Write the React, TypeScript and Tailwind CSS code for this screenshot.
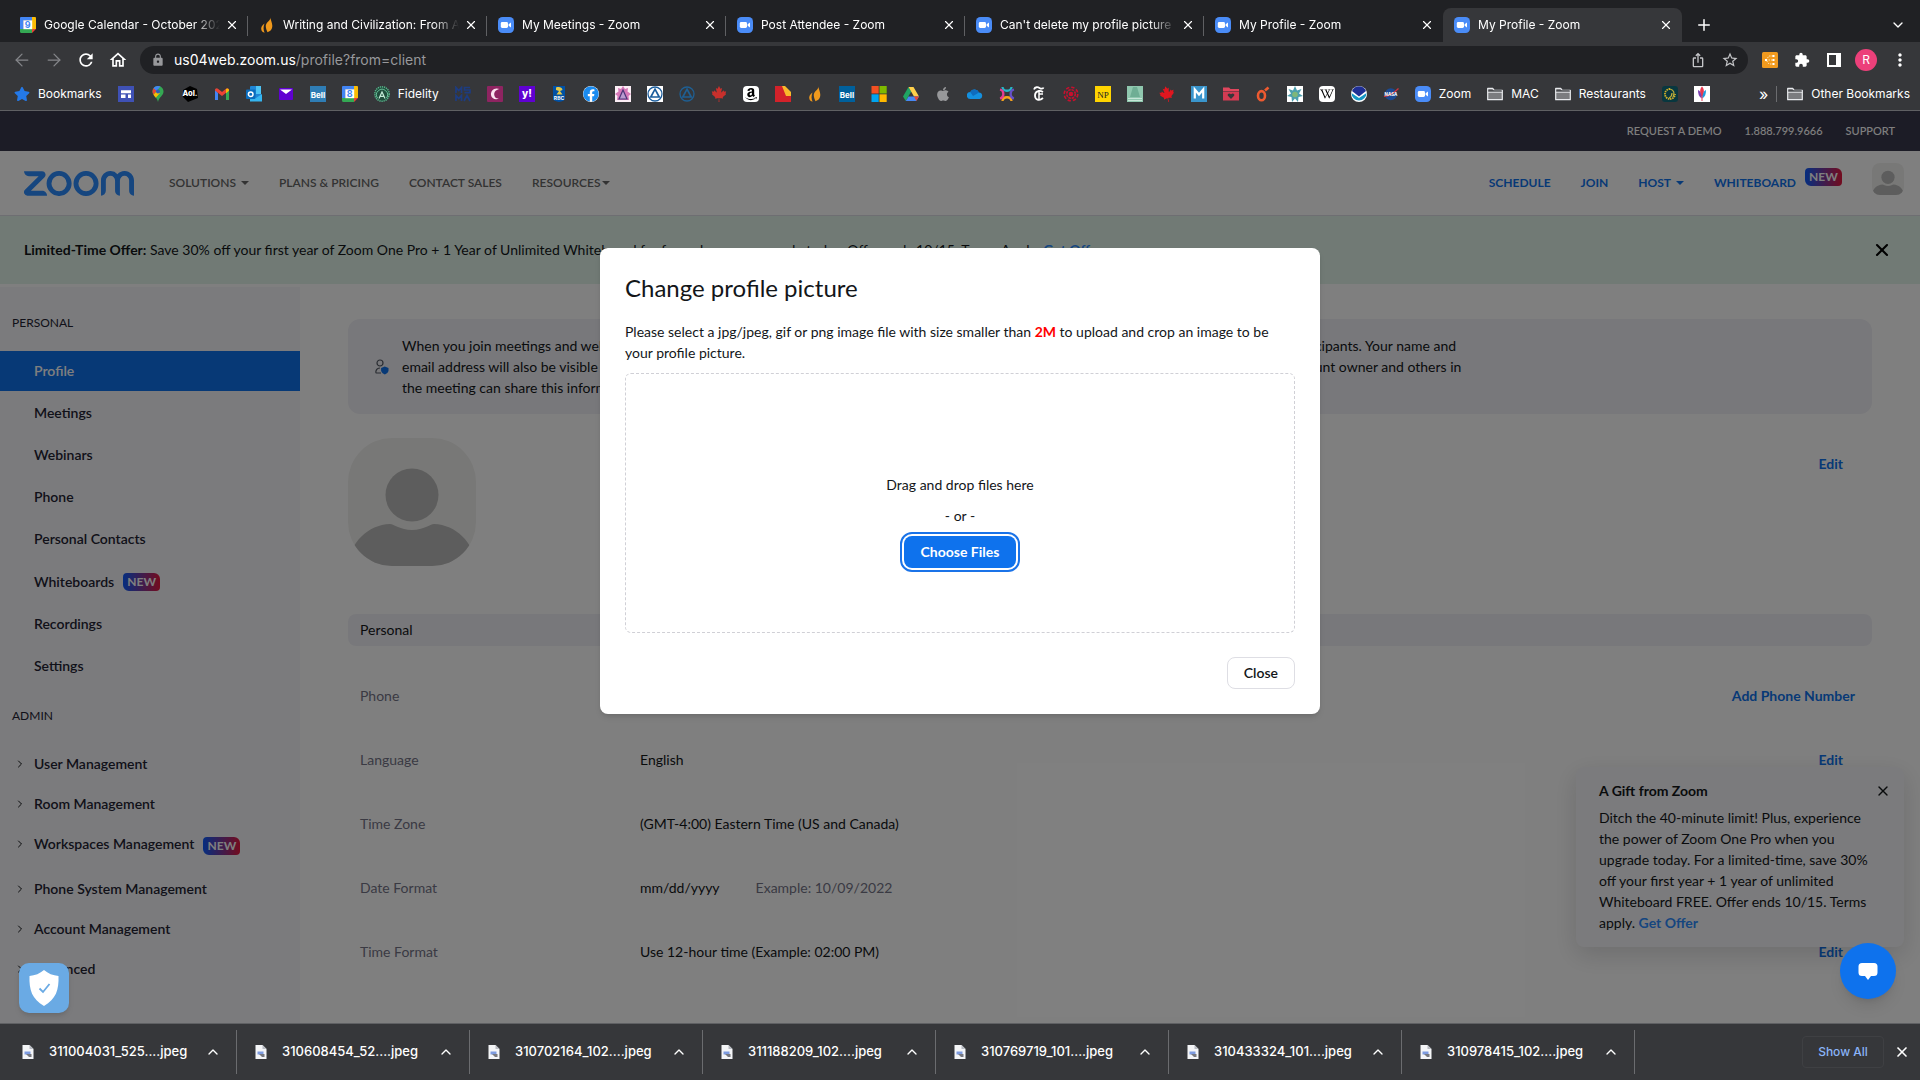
import type { ReactNode } from "react";
import {
  ArrowLeft,
  ArrowRight,
  ChevronDown,
  ChevronRight,
  ChevronUp,
  Plus,
  X,
} from "lucide-react";
import {
  FaAmazon,
  FaApple,
  FaCanadianMapleLeaf,
  FaFacebook,
  FaStar,
  FaWikipediaW,
} from "react-icons/fa";
import {
  MdExtension,
  MdLock,
  MdMoreVert,
  MdOutlineHome,
  MdOutlineIosShare,
  MdRefresh,
  MdStarBorder,
} from "react-icons/md";
import { SiZoom } from "react-icons/si";

function Glyph({ children }: { children: ReactNode }) {
  return (
    <svg viewBox="0 0 16 16" className="h-4 w-4 shrink-0" aria-hidden="true">
      {children}
    </svg>
  );
}

function ZoomIcon() {
  return (
    <Glyph>
      <rect width="16" height="16" rx="4.5" fill="#4a8cf7" />
      <rect x="2.8" y="5" width="7.2" height="6" rx="1.4" fill="#fff" />
      <path d="M10.6 7.2 13 5.4v5.2l-2.4-1.8z" fill="#fff" />
    </Glyph>
  );
}

function CalendarIcon({ day }: { day: string }) {
  return (
    <Glyph>
      <path d="M0 1.2C0 .5.5 0 1.2 0H12v3.5H3.5V12H0z" fill="#4285f4" />
      <path d="M12 0h2.8c.7 0 1.2.5 1.2 1.2V12h-4z" fill="#fbbc04" />
      <path d="M0 12h12v4H1.2C.5 16 0 15.5 0 14.8z" fill="#34a853" />
      <path d="M12 12h4l-4 4z" fill="#ea4335" />
      <rect x="3.3" y="3.3" width="8.9" height="8.9" fill="#fff" />
      <text x="7.8" y="11" fontSize="9" fontWeight="700" textAnchor="middle" fill="#4285f4">
        {day}
      </text>
    </Glyph>
  );
}

function FlameIcon() {
  return (
    <Glyph>
      <path d="M11.5.3c.8 3-5.2 5-4.7 9.5.2 2.200 1 4 1.700 5.400 2.800-.8 5-3 4.800-6.700-.2-3.400-1.700-5-1.800-8.200z" fill="#f0991c" />
      <path d="M5.5 6.500C3 8.200 1.600 10.500 2.400 13c.4 1.300 1.500 2.300 3.200 2.700-1.400-3-1.300-6-.1-9.200z" fill="#f0991c" />
    </Glyph>
  );
}

function FolderIcon() {
  return (
    <Glyph>
      <path d="M.7 13.7V2.300h5l1.500 2h8.100v9.400z" fill="#7b7c7f" stroke="#e8eaed" strokeWidth="1.2" strokeLinejoin="round" />
      <path d="M1.300 4.300h13.400v1.500H1.300z" fill="#36373a" />
      <path d="M.7 6.200h14.600" stroke="#e8eaed" strokeWidth="1" />
    </Glyph>
  );
}

function BellIcon({ fill }: { fill: string }) {
  return (
    <Glyph>
      <rect width="16" height="16" fill={fill} />
      <text x="8" y="11.5" fontSize="8" fontWeight="700" textAnchor="middle" fill="#fff">
        Bell
      </text>
    </Glyph>
  );
}

function TriangleBadge({ ring, bg }: { ring: string; bg: string }) {
  return (
    <Glyph>
      <rect width="16" height="16" fill={bg} />
      <circle cx="8" cy="8" r="7" fill="none" stroke={ring} strokeWidth="1.3" />
      <path d="M8 3.2 12.2 11H3.8z" fill="none" stroke={ring} strokeWidth="1.7" />
    </Glyph>
  );
}

interface Bookmark {
  name: string;
  label?: string;
  icon: ReactNode;
}

const bookmarks: Bookmark[] = [
  { name: "Bookmarks", label: "Bookmarks", icon: <FaStar className="h-4 w-4 shrink-0 text-[#2479e8]" /> },
  {
    name: "Sites",
    icon: (
      <Glyph>
        <rect width="16" height="16" fill="#3f51b5" />
        <path d="M3 4.3h10v2.900H3zM3 8.600h4.500v3.400H3zM10 8.600h3v3.400h-3z" fill="#fff" />
      </Glyph>
    ),
  },
  {
    name: "Maps",
    icon: (
      <Glyph>
        <path d="M8 0C4.700 0 2.500 2.500 2.500 5.500c0 4 4.500 5.500 5.500 10.500 1-5 5.500-6.500 5.500-10.500C13.500 2.500 11.300 0 8 0z" fill="#34a853" />
        <path d="M8 0C6 0 4.500.9 3.500 2.300L6 5.500 10.500.6C9.700.2 8.900 0 8 0z" fill="#4285f4" />
        <path d="M3.500 2.300C2 4.500 2.400 7 3.500 8.700L6.500 5z" fill="#ea4335" />
        <path d="M3.500 8.700c.6 1 1.500 2 2.300 3L10 7 6 6z" fill="#fbbc04" />
        <circle cx="8" cy="5.5" r="2" fill="#2b5fb8" />
      </Glyph>
    ),
  },
  {
    name: "Aol",
    icon: (
      <Glyph>
        <path d="M1 4 8 0l7 3 1 9-10 4-5-5z" fill="#000" />
        <text x="8" y="9.500" fontSize="7.500" fontWeight="800" textAnchor="middle" fill="#fff">
          Aol.
        </text>
      </Glyph>
    ),
  },
  {
    name: "Gmail",
    icon: (
      <Glyph>
        <path d="M1 3v11h3V7z" fill="#4285f4" />
        <path d="M15 3v11h-3V7z" fill="#34a853" />
        <path d="M1 4.500C1 2 3 1.800 4.300 3L8 6l3.700-3C13 1.800 15 2 15 4.500L8 10z" fill="#ea4335" />
        <path d="M12 3v4.200l3-2.500C15 2.400 13.200 2 12 3z" fill="#fbbc04" />
      </Glyph>
    ),
  },
  {
    name: "Outlook",
    icon: (
      <Glyph>
        <rect x="4" y="0" width="11" height="14" rx="1" fill="#1f86d6" />
        <path d="M10 0h5v8h-5z" fill="#4dc4f5" />
        <path d="M4 8l6 4 6-4v7.500H4z" fill="#35b5f0" />
        <rect x="0" y="3.500" width="9.500" height="9.500" rx="1" fill="#0a6cbd" />
        <circle cx="4.700" cy="8.200" r="2.300" fill="none" stroke="#fff" strokeWidth="1.500" />
      </Glyph>
    ),
  },
  {
    name: "Mail",
    icon: (
      <Glyph>
        <rect x="1" y="2" width="14" height="12" rx="1" fill="#6001d2" />
        <path d="M2 3.500h12L8 8z" fill="#fff" />
      </Glyph>
    ),
  },
  { name: "Bell", icon: <BellIcon fill="#2f7db5" /> },
  { name: "Calendar", icon: <CalendarIcon day="8" /> },
  {
    name: "Fidelity",
    label: "Fidelity",
    icon: (
      <Glyph>
        <circle cx="8" cy="8" r="7.200" fill="#1f4d3c" stroke="#56b389" strokeWidth="1.500" strokeDasharray="1.300 .8" />
        <path d="M3.500 12a5.500 5.500 0 1 1 9 0" fill="none" stroke="#6cc39c" strokeWidth="1" />
        <path d="M5 12.500 8 6l3 6.500M6.500 10.300h3" fill="none" stroke="#c3ead7" strokeWidth="1.200" />
      </Glyph>
    ),
  },
  {
    name: "MSMA",
    icon: (
      <Glyph>
        <path d="M1 7V1.500l2.700 3 2.800-3V7M15 1.500H9.500v2.500H15v2.700H9.500M1 15V9.500l2.700 3 2.800-3V15M9 15l3-5.500 3 5.500" fill="none" stroke="#1d3c80" strokeWidth="1.700" />
      </Glyph>
    ),
  },
  {
    name: "Crescent",
    icon: (
      <Glyph>
        <rect width="16" height="16" rx="1" fill="#8e2461" />
        <path d="M12.500 3C7 1 3.500 5 4 9c.4 3.500 4.500 5.500 8 3.500-3 .3-4.700-1.500-4.800-4C7.100 5.500 9.500 3.500 12.500 3z" fill="#fbe3f0" />
      </Glyph>
    ),
  },
  {
    name: "Yahoo",
    icon: (
      <Glyph>
        <rect width="16" height="16" fill="#6001d2" />
        <text x="8" y="11" fontSize="10" fontWeight="800" textAnchor="middle" fill="#fff">
          y!
        </text>
      </Glyph>
    ),
  },
  {
    name: "RBC",
    icon: (
      <Glyph>
        <path d="M2 0h12v13c-1 2-3 2.500-6 3-3-.5-5-1-6-3z" fill="#0051a5" />
        <path d="M5 1.500c3-1 6-.5 6.500 2.500l-2.500 1 2.500 3.500H5.500L8 5 5 4z" fill="#e3c84a" />
        <text x="8" y="13.800" fontSize="5" fontWeight="700" textAnchor="middle" fill="#fff">
          RBC
        </text>
      </Glyph>
    ),
  },
  { name: "Facebook", icon: <FaFacebook className="h-4 w-4 shrink-0 rounded-full bg-white text-[#1a8bf0]" /> },
  {
    name: "Lotus",
    icon: (
      <Glyph>
        <rect width="16" height="16" fill="#fbeef5" />
        <path d="M8 0l2 3 3-1-.5 3.500L16 8l-2.500 2 .5 4H2l.5-4L0 8l3.500-2.500L3 2l3 1z" fill="#d678b8" />
        <path d="M8 4l4 9H4z" fill="#b99bd0" stroke="#4b3478" strokeWidth="1.200" />
      </Glyph>
    ),
  },
  { name: "Alcoholics Anonymous", icon: <TriangleBadge ring="#1b5d9c" bg="#fff" /> },
  { name: "Area meetings", icon: <TriangleBadge ring="#1f5f92" bg="#36373a" /> },
  { name: "Canada", icon: <FaCanadianMapleLeaf className="h-4 w-4 shrink-0 text-[#c9302c]" /> },
  {
    name: "Amazon",
    icon: (
      <span className="flex h-4 w-4 shrink-0 items-center justify-center rounded-sm bg-white">
        <FaAmazon className="h-[14px] w-[14px] text-black" />
      </span>
    ),
  },
  {
    name: "Flag",
    icon: (
      <Glyph>
        <path d="M0 0h7l9 10v6H0z" fill="#d3222a" />
        <path d="M7 0h3l6 6v4H11z" fill="#f9b92b" />
      </Glyph>
    ),
  },
  { name: "Wondrium", icon: <FlameIcon /> },
  { name: "Bell MTS", icon: <BellIcon fill="#00609c" /> },
  {
    name: "Microsoft",
    icon: (
      <Glyph>
        <path d="M.5 0h7.200v7.500H.5z" fill="#f25022" />
        <path d="M8.500 0h7.200v7.500H8.500z" fill="#7fba00" />
        <path d="M.5 8.300h7.200V16H.5z" fill="#00a4ef" />
        <path d="M8.500 8.300h7.200V16H8.500z" fill="#ffb900" />
      </Glyph>
    ),
  },
  {
    name: "Drive",
    icon: (
      <Glyph>
        <path d="M5.500 1 0 10.500 2.800 15l5.400-9.400z" fill="#1fa463" />
        <path d="M5.500 1h5L16 10.500h-5z" fill="#ffd04b" />
        <path d="M5.500 10.500H16L13.200 15H2.800z" fill="#4688f4" />
        <path d="M11 10.500h5L13.300 15z" fill="#ea4335" />
      </Glyph>
    ),
  },
  { name: "Apple", icon: <FaApple className="h-4 w-4 shrink-0 text-[#97989a]" /> },
  {
    name: "OneDrive",
    icon: (
      <Glyph>
        <path d="M3.500 13a3.500 3.500 0 0 1-.3-7A5 5 0 0 1 12 6.500 3.300 3.300 0 0 1 12.700 13z" fill="#1490df" />
        <path d="M3.200 6A5 5 0 0 1 12 6.500L6 10z" fill="#0f6cbd" />
      </Glyph>
    ),
  },
  {
    name: "Xfinity",
    icon: (
      <Glyph>
        <path d="M3.500 1C4 6 12 6 12.500 1" fill="none" stroke="#27b5c7" strokeWidth="2.300" />
        <path d="M3.500 15C4 10 12 10 12.500 15" fill="none" stroke="#f6a21e" strokeWidth="2.300" />
        <path d="M1 3.500C5.500 4.500 5.500 11.500 1 12.500" fill="none" stroke="#e53c91" strokeWidth="2.300" />
        <path d="M15 3.500C10.500 4.500 10.500 11.500 15 12.500" fill="none" stroke="#6550c8" strokeWidth="2.300" />
      </Glyph>
    ),
  },
  {
    name: "New York Times",
    icon: (
      <Glyph>
        <path d="M3 3.500C4 .5 7 1 8.500 2s3.500 1 4-.5" fill="none" stroke="#fff" strokeWidth="1.800" />
        <path d="M12 6C8 3.500 4 5.500 4 9.500s4 6 8 2.500" fill="none" stroke="#fff" strokeWidth="1.800" />
        <path d="M8 4v9.500M8 8h4" stroke="#fff" strokeWidth="1.500" />
      </Glyph>
    ),
  },
  {
    name: "CBC",
    icon: (
      <Glyph>
        <circle cx="8" cy="8" r="2.300" fill="#c8102e" />
        <circle cx="8" cy="8" r="4.300" fill="none" stroke="#c8102e" strokeWidth="1.600" strokeDasharray="2.500 .88" />
        <circle cx="8" cy="8" r="6.800" fill="none" stroke="#c8102e" strokeWidth="1.600" strokeDasharray="3.400 1.940" />
      </Glyph>
    ),
  },
  {
    name: "National Post",
    icon: (
      <Glyph>
        <rect width="16" height="16" fill="#ffd400" />
        <text x="8" y="11.500" fontSize="9" fontFamily="Liberation Serif, serif" textAnchor="middle" fill="#222">
          NP
        </text>
      </Glyph>
    ),
  },
  {
    name: "Tower",
    icon: (
      <Glyph>
        <rect width="16" height="16" fill="#8fc7ae" />
        <path d="M6 1h4l3 10H3z" fill="#6fae94" />
        <path d="M1 12.500h14M1 14.500h14" stroke="#d4ece1" strokeWidth=".8" />
      </Glyph>
    ),
  },
  { name: "Maple leaf", icon: <FaCanadianMapleLeaf className="h-4 w-4 shrink-0 -rotate-12 text-[#e0161f]" /> },
  {
    name: "Medium",
    icon: (
      <Glyph>
        <rect width="16" height="16" fill="#3a95cc" />
        <path d="M3.800 12.500v-9L8 8.500l4.200-5v9" fill="none" stroke="#fff" strokeWidth="2.200" />
      </Glyph>
    ),
  },
  {
    name: "Favourites folder",
    icon: (
      <Glyph>
        <path d="M0 1.500h6l1.500 1.500H16v2H0z" fill="#e0465d" />
        <rect y="5.500" width="16" height="9" fill="#d43b53" />
        <path d="M8 13 4.900 9.800c-1-1.600 1.300-3.300 3.100-1.500 1.800-1.800 4.100-.1 3.100 1.500z" fill="#36373a" />
      </Glyph>
    ),
  },
  {
    name: "Orange",
    icon: (
      <Glyph>
        <ellipse cx="6.500" cy="9.700" rx="3.500" ry="4.600" fill="none" stroke="#ee5a30" strokeWidth="2.600" />
        <path d="M10 4.500 13.500 1.500" stroke="#ee5a30" strokeWidth="2.600" />
      </Glyph>
    ),
  },
  {
    name: "Petals",
    icon: (
      <Glyph>
        <rect width="16" height="16" fill="#fff" />
        <path d="M8 0l2 4.500L14.500 3 12 7.500l4 2.500-4.500 1L11 16l-3-3.500L5 16l-.5-5L0 10l4-2.500L1.500 3 6 4.500z" fill="#4c9fae" />
        <circle cx="8" cy="8.500" r="2.800" fill="#7fb77a" />
      </Glyph>
    ),
  },
  {
    name: "Wikipedia",
    icon: (
      <span className="flex h-4 w-4 shrink-0 items-center justify-center rounded-sm bg-white">
        <FaWikipediaW className="h-[14px] w-[14px] text-black" />
      </span>
    ),
  },
  {
    name: "NOAA",
    icon: (
      <Glyph>
        <circle cx="8" cy="8" r="8" fill="#fff" />
        <path d="M1 5a7.500 7.500 0 0 1 14 0L8 10.500z" fill="#1f2f94" />
        <path d="M.5 7 8 12l7.500-5a7.500 7.500 0 0 1-15 0z" fill="#1597c6" />
      </Glyph>
    ),
  },
  {
    name: "NASA",
    icon: (
      <Glyph>
        <circle cx="7.800" cy="8.300" r="6" fill="#1a4a94" />
        <path d="M1 10.500C6 10 12 6 15.500 2.500" fill="none" stroke="#d5323e" strokeWidth="1.200" />
        <text x="8" y="10" fontSize="4.500" fontWeight="700" textAnchor="middle" fill="#fff">
          NASA
        </text>
      </Glyph>
    ),
  },
  { name: "Zoom", label: "Zoom", icon: <ZoomIcon /> },
  { name: "MAC", label: "MAC", icon: <FolderIcon /> },
  { name: "Restaurants", label: "Restaurants", icon: <FolderIcon /> },
  {
    name: "Circle",
    icon: (
      <Glyph>
        <rect width="16" height="16" rx="3" fill="#08373f" />
        <path d="M8 3a5 5 0 1 0 5 5" fill="none" stroke="#d6b32b" strokeWidth="1.800" strokeDasharray="1.500 .7" />
        <path d="M8 3c4 1 5 4 3 8M7 12c2-1 3-3 3-5" fill="none" stroke="#c2b03a" strokeWidth="1.200" />
      </Glyph>
    ),
  },
  {
    name: "Feather",
    icon: (
      <Glyph>
        <rect width="16" height="16" fill="#fff" />
        <path d="M8 .5c2.500 2 2.500 8 0 11.500-2.500-3.500-2.500-9.500 0-11.500z" fill="#e8384f" />
        <path d="M4 4c2.500 1 3.500 4 3.700 8.500C5 11 4 8 4 4z" fill="#7b3fb0" />
        <path d="M12 4c-2.500 1-3.500 4-3.700 8.500C11 11 12 8 12 4z" fill="#1f9be0" />
        <path d="M8 11v4" stroke="#e8384f" strokeWidth="1" />
      </Glyph>
    ),
  },
];

const tabs = [
  { title: "Google Calendar - October 2022", icon: <CalendarIcon day="9" /> },
  { title: "Writing and Civilization: From Ancient", icon: <FlameIcon /> },
  { title: "My Meetings - Zoom", icon: <ZoomIcon /> },
  { title: "Post Attendee - Zoom", icon: <ZoomIcon /> },
  { title: "Can't delete my profile picture", icon: <ZoomIcon /> },
  { title: "My Profile - Zoom", icon: <ZoomIcon /> },
  { title: "My Profile - Zoom", icon: <ZoomIcon />, active: true },
];

const downloads = [
  "311004031_525....jpeg",
  "310608454_52....jpeg",
  "310702164_102....jpeg",
  "311188209_102....jpeg",
  "310769719_101....jpeg",
  "310433324_101....jpeg",
  "310978415_102....jpeg",
];

const personalItems = ["Profile", "Meetings", "Webinars", "Phone", "Personal Contacts", "Whiteboards", "Recordings", "Settings"];

const adminItems = [
  "User Management",
  "Room Management",
  "Workspaces Management",
  "Phone System Management",
  "Account Management",
  "Advanced",
];

const profileRows = [
  { label: "Phone", value: "", action: "Add Phone Number" },
  { label: "Language", value: "English", action: "Edit" },
  { label: "Time Zone", value: "(GMT-4:00) Eastern Time (US and Canada)", action: "Edit" },
  { label: "Date Format", value: "mm/dd/yyyy", example: "Example: 10/09/2022", action: "Edit" },
  { label: "Time Format", value: "Use 12-hour time (Example: 02:00 PM)", action: "Edit" },
];

function NewBadge() {
  return (
    <span className="inline-flex h-[18px] w-[37px] items-center justify-center rounded-sm rounded-tr-md rounded-bl-md bg-linear-to-r/srgb from-[#0b5cff] to-[#e8173d] text-xs font-bold text-white">
      NEW
    </span>
  );
}

function Caret() {
  return (
    <svg viewBox="0 0 8 4" className="h-1 w-2" aria-hidden="true">
      <path d="M0 0h8L4 4z" fill="currentColor" />
    </svg>
  );
}

function Avatar({ className }: { className: string }) {
  return (
    <svg viewBox="0 0 128 128" className={className} role="img" aria-label="Profile picture">
      <rect width="128" height="128" fill="#f1f1ee" />
      <circle cx="64" cy="57" r="26.500" fill="#bababa" />
      <path d="M0 128c2-24 20-41 42-42 4 0 10 6 22 6s18-6 22-6c22 1 40 18 42 42z" fill="#bababa" />
    </svg>
  );
}

function TabStrip() {
  return (
    <div className="flex h-[42px] items-end bg-[#202124] pl-[9px] text-white">
      {tabs.map((tab, i) => (
        <div
          key={i}
          className={`relative flex h-[34px] w-[239px] items-center rounded-t-lg pr-2 pl-[11px] ${tab.active ? "bg-[#36373a]" : ""}`}
        >
          {tab.icon}
          <span className="ml-2 h-5 flex-1 overflow-hidden mask-r-from-85% text-xs leading-5 whitespace-nowrap">{tab.title}</span>
          <button aria-label="Close tab" className="ml-1 flex h-4 w-4 items-center justify-center">
            <X className="h-3.5 w-3.5" />
          </button>
          {i < 5 && <span className="absolute top-2 right-0 h-5 w-px bg-[#5f6063]" />}
        </div>
      ))}
      <button aria-label="New tab" className="ml-[13px] flex h-[34px] items-center">
        <Plus className="h-[18px] w-[18px]" />
      </button>
      <button aria-label="Search tabs" className="mr-[14px] ml-auto flex h-[34px] items-center">
        <ChevronDown className="h-4 w-4" />
      </button>
    </div>
  );
}

function Toolbar() {
  return (
    <div className="flex h-9 items-center pt-1 pr-[10px] pb-1 pl-3 text-white">
      <div className="flex w-32 gap-3">
        <button aria-label="Back" className="text-[#85868a]">
          <ArrowLeft className="h-5 w-5" strokeWidth={1.5} />
        </button>
        <button aria-label="Forward" className="text-[#85868a]">
          <ArrowRight className="h-5 w-5" strokeWidth={1.5} />
        </button>
        <button aria-label="Reload">
          <MdRefresh className="h-5 w-5" />
        </button>
        <button aria-label="Home">
          <MdOutlineHome className="h-5 w-5" />
        </button>
      </div>
      <div className="flex h-7 flex-1 items-center rounded-full bg-[#202124] pr-[9px] pl-[11px] text-sm">
        <MdLock className="mr-[9px] h-[14px] w-[14px] text-[#97989b]" />
        <span>us04web.zoom.us</span>
        <input
          aria-label="Address"
          defaultValue="/profile?from=client"
          className="min-w-0 flex-1 bg-transparent text-[#97989b] outline-none"
        />
        <button aria-label="Share" className="mr-[15px] text-[#c4c5c8]">
          <MdOutlineIosShare className="h-4 w-4" />
        </button>
        <button aria-label="Bookmark this page" className="text-[#c4c5c8]">
          <MdStarBorder className="h-[18px] w-[18px]" />
        </button>
      </div>
      <div className="ml-[14px] flex items-center gap-4">
        <button aria-label="Extension">
          <Glyph>
            <rect width="16" height="16" rx="1.500" fill="#f19a1f" />
            <path d="M11 4H7L4 8l3 4h4M4 8h7" fill="none" stroke="#ffe3b5" strokeWidth="1" strokeDasharray="1.500 1" />
            <path d="M10.500 4h2M10.500 12h2M10.500 8h2M3 8h2" stroke="#fff" strokeWidth="1.800" />
          </Glyph>
        </button>
        <button aria-label="Extensions">
          <MdExtension className="h-4 w-4" />
        </button>
        <button aria-label="Side panel">
          <Glyph>
            <rect x="2" y="2" width="12" height="12" fill="none" stroke="#fff" strokeWidth="2" />
            <path d="M10 2h4v12h-4z" fill="#fff" />
          </Glyph>
        </button>
        <button aria-label="Account" className="-mx-[3px] flex h-[22px] w-[22px] items-center justify-center rounded-full bg-[#ec407a] text-xs">
          R
        </button>
        <button aria-label="Menu">
          <MdMoreVert className="h-5 w-5" />
        </button>
      </div>
    </div>
  );
}

function BookmarksBar() {
  return (
    <div className="flex h-[33px] items-center gap-4 border-b border-[#5f6063] pr-[10px] pl-[14px] text-xs text-white">
      {bookmarks.map((b) => (
        <a key={b.name} href="#" aria-label={b.name} className="flex shrink-0 items-center gap-2">
          {b.icon}
          {b.label}
        </a>
      ))}
      <div className="ml-auto flex items-center">
        <button aria-label="More bookmarks" className="mr-2 text-base leading-4">
          »
        </button>
        <span className="mr-[10px] h-4 w-px bg-[#6b6c6f]" />
        <a href="#" className="flex items-center gap-2">
          <FolderIcon />
          Other Bookmarks
        </a>
      </div>
    </div>
  );
}

function SiteHeader() {
  return (
    <header>
      <div className="flex h-10 items-center justify-end gap-[23px] bg-[#39394d] pr-[25px] text-[11px] font-medium text-white">
        <a href="#">REQUEST A DEMO</a>
        <a href="#">1.888.799.9666</a>
        <a href="#">SUPPORT</a>
      </div>
      <div className="flex h-[65px] items-center border-b border-[#dcdce4] bg-white pr-4 pl-6 text-xs font-semibold text-[#666]">
        <a href="#" aria-label="Zoom" className="mr-[35px] text-[#2d8cff]">
          <SiZoom viewBox="0 9.3 24 5.4" className="h-[25px] w-[110px]" />
        </a>
        <nav className="flex items-center gap-[30px]">
          <button className="flex items-center gap-[5px]">
            SOLUTIONS <Caret />
          </button>
          <a href="#">PLANS &amp; PRICING</a>
          <a href="#">CONTACT SALES</a>
          <button className="flex items-center gap-0.5">
            RESOURCES <Caret />
          </button>
        </nav>
        <nav className="ml-auto flex items-center gap-[30px] font-bold text-[#0e72ed]">
          <a href="#">SCHEDULE</a>
          <a href="#">JOIN</a>
          <button className="flex items-center gap-[5px]">
            HOST <Caret />
          </button>
          <a href="#" className="flex items-center gap-[9px]">
            WHITEBOARD
            <span className="flex pb-3">
              <NewBadge />
            </span>
          </a>
          <button aria-label="Account menu" className="pb-2">
            <Avatar className="h-8 w-8 rounded-lg" />
          </button>
        </nav>
      </div>
      <div className="flex h-[68px] items-center bg-[#e2f5eb] pr-7 pl-6 text-[#131619]">
        <p className="whitespace-nowrap">
          <strong>Limited-Time Offer:</strong> Save 30% off your first year of Zoom One Pro + 1 Year of Unlimited Whiteboard for
          free when you upgrade today. Offer ends 10/15. Terms Apply.{" "}
          <a href="#" className="font-bold text-[#2d8cff]">
            Get Offer
          </a>
        </p>
        <button aria-label="Dismiss offer" className="ml-auto">
          <X className="h-5 w-5 text-black" strokeWidth={2.5} />
        </button>
      </div>
    </header>
  );
}

function Sidebar() {
  return (
    <aside className="mt-[3px] w-[300px] shrink-0 bg-[#f7f7fa] pt-[26px] text-[#232333]">
      <h2 className="pl-3 text-xs leading-5">PERSONAL</h2>
      <nav className="mt-[18px] flex flex-col gap-0.5 font-semibold">
        {personalItems.map((item) => (
          <a
            key={item}
            href="#"
            className={`flex items-center gap-[9px] pl-[34px] ${item === "Whiteboards" ? "h-[41px]" : "h-10"} ${item === "Profile" ? "bg-[#0e72ed] text-white" : ""}`}
          >
            {item}
            {item === "Whiteboards" && <NewBadge />}
          </a>
        ))}
      </nav>
      <h2 className="mt-5 pl-3 text-xs leading-5">ADMIN</h2>
      <nav className="mt-[18px] flex flex-col font-semibold">
        {adminItems.map((item) => (
          <a
            key={item}
            href="#"
            className={`flex items-center pl-[14px] ${item === "Workspaces Management" ? "h-[45px] pb-[5px]" : "h-10"}`}
          >
            <ChevronRight className="mr-2 h-3 w-3 text-[#131619]" />
            {item}
            {item === "Workspaces Management" && (
              <span className="mt-1 ml-[9px] flex">
                <NewBadge />
              </span>
            )}
          </a>
        ))}
      </nav>
    </aside>
  );
}

function ProfileContent() {
  return (
    <main className="flex-1 pt-[35px] pr-12 pl-12 text-[#131619]">
      <div className="flex items-center rounded-xl bg-[#f1f1f6] py-4 pl-[27px] leading-[21px]">
        <svg viewBox="0 0 14 16" className="mr-[13px] h-4 w-[14px]" aria-hidden="true">
          <circle cx="5" cy="4" r="3" fill="none" stroke="#555b66" strokeWidth="1.200" />
          <path d="M6 14H1.200C.5 14 .5 9 5 9" fill="none" stroke="#555b66" strokeWidth="1.200" />
          <path d="M9.800 7.500 13.500 9v2.500c0 2-2 3.300-3.700 4-1.700-.7-3.700-2-3.700-4V9z" fill="#0e72ed" />
        </svg>
        <p className="whitespace-nowrap">
          When you join meetings and webinars hosted on Zoom, your profile information, including your name and profile picture, may be visible to other participants. Your name and
          <br />
          email address will also be visible to the account owner and host when you join meetings, webinars, or chats on their account while signed in. The account owner and others in
          <br />
          the meeting can share this information with apps and others.
        </p>
      </div>
      <div className="mt-6 flex items-start justify-between pr-[29px]">
        <Avatar className="h-32 w-32 rounded-[44px]" />
        <a href="#" className="mt-4 font-bold text-[#0e72ed]">
          Edit
        </a>
      </div>
      <h3 className="mt-12 rounded-lg bg-[#f1f1f6] px-3 py-[6px]">Personal</h3>
      <dl className="mt-[18px]">
        {profileRows.map((row) => (
          <div key={row.label} className="flex h-16 items-center pl-3">
            <dt className="w-[280px] text-[#747487]">{row.label}</dt>
            <dd className="flex flex-1 items-center">
              <span>{row.value}</span>
              {row.example && <span className="ml-9 text-[#747487]">{row.example}</span>}
              <a href="#" className={`ml-auto font-bold text-[#0e72ed] ${row.action === "Edit" ? "pr-[29px]" : "pr-[17px]"}`}>
                {row.action}
              </a>
            </dd>
          </div>
        ))}
      </dl>
    </main>
  );
}

function GiftCard() {
  return (
    <section className="absolute right-4 bottom-[76px] w-[328px] rounded-lg bg-[#f7f7fa] px-[23px] pt-[14px] pb-[14px] text-[#131619] shadow-[0_8px_24px_rgba(19,22,25,0.15)]">
      <div className="mb-[6px] flex items-center">
        <h3 className="font-bold">A Gift from Zoom</h3>
        <button aria-label="Close gift offer" className="-mr-[10px] ml-auto">
          <X className="h-4 w-4" strokeWidth={2} />
        </button>
      </div>
      <p className="leading-[21px]">
        Ditch the 40-minute limit! Plus, experience the power of Zoom One Pro when you upgrade today. For a limited-time,
        save 30% off your first year + 1 year of unlimited Whiteboard FREE. Offer ends 10/15. Terms apply.{" "}
        <a href="#" className="font-bold text-[#2d8cff]">
          Get Offer
        </a>
      </p>
    </section>
  );
}

function PictureDialog() {
  return (
    <div className="absolute inset-0 flex items-start justify-center bg-black/50 pt-[137px]">
      <div
        role="dialog"
        aria-labelledby="picture-title"
        className="w-[720px] rounded-lg bg-white px-[25px] pt-[22px] pb-[25px] text-[#131619] shadow-md"
      >
        <h2 id="picture-title" className="text-2xl leading-9">
          Change profile picture
        </h2>
        <p className="mt-[15px] leading-[21px]">
          Please select a jpg/jpeg, gif or png image file with size smaller than <strong className="text-[#f00]">2M</strong> to
          upload and crop an image to be your profile picture.
        </p>
        <div className="mt-[10px] flex h-[260px] flex-col items-center gap-[10px] rounded-md border border-dashed border-[#d0d0d6] pt-[100px] leading-[21px]">
          <p>Drag and drop files here</p>
          <p>- or -</p>
          <button className="h-8 w-28 rounded-lg bg-[#0e72ed] pb-px font-bold text-white outline-2 outline-offset-2 outline-[#1a73e8]">
            Choose Files
          </button>
        </div>
        <div className="mt-6 flex justify-end">
          <button className="h-8 rounded-lg border border-[#dedee4] px-4 font-semibold">Close</button>
        </div>
      </div>
    </div>
  );
}

function DownloadBar() {
  return (
    <footer className="flex h-[57px] items-center border-t border-[#5f6063] bg-[#36373a] pr-[10px] text-[13px] font-medium text-white">
      {downloads.map((file, i) => (
        <div key={i} className={`flex h-11 items-center border-r border-[#6b6c6f] ${i === 0 ? "w-[237px] pl-[21px]" : "w-[233px] pl-[17px]"}`}>
          <svg viewBox="0 0 14 16" className="mr-[14px] h-4 w-[14px]" aria-hidden="true">
            <path d="M1.500 1h7l4 4v10h-11z" fill="#f4f5f7" />
            <path d="M8.500 1v4h4z" fill="#b9bcc4" />
            <path d="M3.500 7.500h6v3h-6z" fill="#7d9be0" />
            <path d="M5 10h5.500v3H8z" fill="#77787f" />
          </svg>
          <span>{file}</span>
          <button aria-label={`Options for ${file}`} className="mr-[15px] ml-auto">
            <ChevronUp className="h-4 w-4" />
          </button>
        </div>
      ))}
      <button className="ml-auto h-8 w-[82px] rounded border border-[#3f4043] pb-px text-xs text-[#8ab4f8]">Show All</button>
      <button aria-label="Close downloads" className="ml-[10px]">
        <X className="h-4 w-4" strokeWidth={2.5} />
      </button>
    </footer>
  );
}

export default function App() {
  return (
    <div className="flex h-screen flex-col overflow-hidden font-['Inter',sans-serif]">
      <div className="bg-[#36373a]">
        <TabStrip />
        <Toolbar />
        <BookmarksBar />
      </div>
      <div className="relative flex min-h-0 flex-1 flex-col overflow-hidden bg-white font-['Lato',sans-serif] text-sm">
        <SiteHeader />
        <div className="flex flex-1">
          <Sidebar />
          <ProfileContent />
        </div>
        <GiftCard />
        <PictureDialog />
        <button
          aria-label="Privacy settings"
          className="absolute bottom-[10px] left-[19px] flex h-[50px] w-[50px] items-center justify-center rounded-[10px] bg-[#6aaae4] shadow-md"
        >
          <svg viewBox="0 0 30 36" className="h-9 w-[30px]" aria-hidden="true">
            <path d="M15 0c4 3.500 9 5.500 14.500 6C30 20 27 29 15 36 3 29 0 20 .5 6 6 5.500 11 3.500 15 0z" fill="#fff" />
            <path d="M10.500 18.500 14 22l6.500-8" fill="none" stroke="#6aaae4" strokeWidth="1.800" />
          </svg>
        </button>
        <button
          aria-label="Chat"
          className="absolute right-6 bottom-6 flex h-14 w-14 items-center justify-center rounded-full bg-[#0e72ed] shadow-lg"
        >
          <svg viewBox="0 0 20 18" className="mt-0.5 h-[18px] w-5" aria-hidden="true">
            <path d="M4 0h12a3.500 3.500 0 0 1 3.500 3.500v6A3.500 3.500 0 0 1 16 13h-3l-3 4-3-4H4A3.500 3.500 0 0 1 .5 9.500v-6A3.500 3.500 0 0 1 4 0z" fill="#fff" />
          </svg>
        </button>
      </div>
      <DownloadBar />
    </div>
  );
}
